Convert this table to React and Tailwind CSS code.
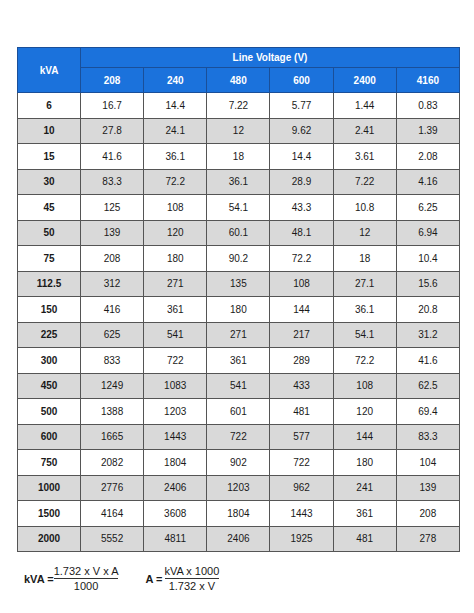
const volts = ['208', '240', '480', '600', '2400', '4160'];

const rows = [
    ['6', '16.7', '14.4', '7.22', '5.77', '1.44', '0.83'],
    ['10', '27.8', '24.1', '12', '9.62', '2.41', '1.39'],
    ['15', '41.6', '36.1', '18', '14.4', '3.61', '2.08'],
    ['30', '83.3', '72.2', '36.1', '28.9', '7.22', '4.16'],
    ['45', '125', '108', '54.1', '43.3', '10.8', '6.25'],
    ['50', '139', '120', '60.1', '48.1', '12', '6.94'],
    ['75', '208', '180', '90.2', '72.2', '18', '10.4'],
    ['112.5', '312', '271', '135', '108', '27.1', '15.6'],
    ['150', '416', '361', '180', '144', '36.1', '20.8'],
    ['225', '625', '541', '271', '217', '54.1', '31.2'],
    ['300', '833', '722', '361', '289', '72.2', '41.6'],
    ['450', '1249', '1083', '541', '433', '108', '62.5'],
    ['500', '1388', '1203', '601', '481', '120', '69.4'],
    ['600', '1665', '1443', '722', '577', '144', '83.3'],
    ['750', '2082', '1804', '902', '722', '180', '104'],
    ['1000', '2776', '2406', '1203', '962', '241', '139'],
    ['1500', '4164', '3608', '1804', '1443', '361', '208'],
    ['2000', '5552', '4811', '2406', '1925', '481', '278'],
];

const Fraction = ({ top, bottom }) => (
    <span className="inline-flex flex-col items-center align-middle leading-none">
        <span className="border-b border-[#333] pb-[1px]">{top}</span>
        <span className="pt-[2px]">{bottom}</span>
    </span>
);

export default function App() {
    return (
        <div className="w-[474px] h-[613px] bg-white font-['Liberation_Sans',Arial,sans-serif] text-[#1a1a1a]">
            <div className="pt-[47px] pl-[17px]">
                <table className="w-[443px] border-collapse table-fixed text-[10px]">
                    <thead>
                        <tr className="h-[20px]">
                            <th rowSpan={2} className="bg-[#1b72dc] text-white font-bold border border-[#1a4f99] w-[63px]">
                                kVA
                            </th>
                            <th colSpan={6} className="bg-[#1b72dc] text-white font-bold border border-[#1a4f99]">
                                Line Voltage (V)
                            </th>
                        </tr>
                        <tr className="h-[25px]">
                            {volts.map((v) => (
                                <th key={v} className="bg-[#1b72dc] text-white font-bold border border-[#1a4f99]">
                                    {v}
                                </th>
                            ))}
                        </tr>
                    </thead>
                    <tbody>
                        {rows.map((r, i) => (
                            <tr key={r[0]} className={`h-[25.5px] ${i % 2 === 1 ? 'bg-[#d9d9d9]' : 'bg-white'}`}>
                                {r.map((c, j) => (
                                    <td
                                        key={j}
                                        className={`border border-[#555] text-center p-0 ${j === 0 ? 'font-bold' : ''}`}
                                    >
                                        {c}
                                    </td>
                                ))}
                            </tr>
                        ))}
                    </tbody>
                </table>
            </div>

            {/* Formulas */}
            <div className="flex items-center gap-[27px] pl-[24px] pt-[14px] text-[11px]">
                <div className="flex items-center">
                    <span className="font-bold">kVA =</span>
                    <Fraction top="1.732 x V x A" bottom="1000" />
                </div>
                <div className="flex items-center">
                    <span className="font-bold mr-[2px]">A =</span>
                    <Fraction top="kVA x 1000" bottom="1.732 x V" />
                </div>
            </div>
        </div>
    );
}
